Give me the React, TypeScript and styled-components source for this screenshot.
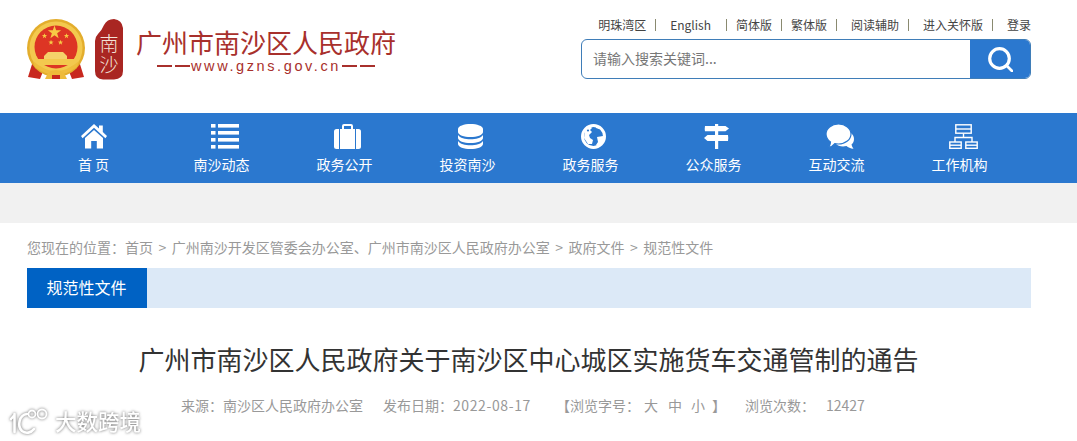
import React from "react";
import styled, { createGlobalStyle } from "styled-components";

const cjk = `"Noto Sans CJK SC", "Noto Sans", sans-serif`;

const Global = createGlobalStyle`
  html, body { margin: 0; padding: 0; background: #fff; height: 441px; overflow: hidden; }
  body { font-family: ${cjk}; }
`;

const Page = styled.div`
  position: relative;
  width: 1077px;
  height: 441px;
  overflow: hidden;
`;

const Header = styled.header`
  height: 113px;
  padding: 0 46px 0 27px;
  display: flex;
  justify-content: space-between;
  box-sizing: border-box;
`;

const LogoWrap = styled.div`
  display: flex;
  align-items: flex-start;
  padding-top: 19px;
`;

const LogoSeal = styled.svg`
  margin-left: 9px;
  flex: none;
`;

const SealText = styled.text`
  writing-mode: vertical-rl;
  font-family: ${cjk};
  font-size: 19px;
  font-weight: 300;
  letter-spacing: 2px;
  fill: #f3e3d8;
`;

const LogoTexts = styled.div`
  margin-left: 11px;
  padding-top: 7px;
  color: #a8302c;
  display: flex;
  flex-direction: column;
  align-items: center;
  width: 262px;
`;

const LogoTitle = styled.div`
  font-size: 26px;
  line-height: 32px;
  white-space: nowrap;
`;

const LogoUrl = styled.div`
  display: flex;
  align-items: center;
  margin-top: -1px;
  font-family: "Liberation Sans", sans-serif;
  font-size: 14.5px;
  line-height: 18px;
  letter-spacing: 2.6px;
  white-space: nowrap;
`;

const UrlDash = styled.span`
  display: block;
  flex: none;
  width: 15px;
  height: 2px;
  margin: 0 1.5px;
  background: #a8302c;
`;

const Right = styled.div`
  width: 450px;
  display: flex;
  flex-direction: column;
  padding-top: 17px;
`;

const TopLinks = styled.div`
  display: flex;
  justify-content: flex-end;
  height: 16px;
  align-items: center;
  font-size: 12px;
  line-height: 16px;
  color: #444;
  white-space: nowrap;
`;

const TopLink = styled.span<{ $before?: number; $after?: number }>`
  margin-left: ${(p) => p.$before ?? 0}px;
  margin-right: ${(p) => p.$after ?? 0}px;
`;

const Sep = styled.i`
  display: block;
  width: 1px;
  height: 12px;
  background: #8a8a70;
`;

const SearchBox = styled.div`
  margin-top: 6px;
  height: 40px;
  box-sizing: border-box;
  border: 1px solid #3f7db8;
  border-radius: 6px;
  display: flex;
  overflow: hidden;
`;

const Placeholder = styled.div`
  flex: 1;
  padding-left: 11px;
  font-size: 14px;
  line-height: 37px;
  color: #777;
`;

const SearchBtn = styled.div`
  width: 60px;
  background: #2b78cf;
  display: flex;
  align-items: center;
  justify-content: center;
`;

const Nav = styled.nav`
  height: 70px;
  background: #2b78cf;
  padding-left: 27px;
  display: grid;
  grid-template-columns: 133px repeat(7, 123px);
`;

const NavItem = styled.div`
  display: flex;
  flex-direction: column;
  align-items: center;
  color: #fff;
`;

const NavIcon = styled.div<{ $shift: number }>`
  height: 25px;
  margin-top: 11px;
  margin-left: ${(p) => p.$shift}px;
  display: flex;
  align-items: center;
  justify-content: center;
`;

const NavLabel = styled.div`
  margin-top: 5px;
  font-size: 14px;
  line-height: 20px;
  white-space: pre;
`;

const GrayBand = styled.div`
  height: 40px;
  background: #f1f1f1;
`;

const Main = styled.main`
  margin: 0 46px 0 27px;
`;

const Crumbs = styled.div`
  padding-top: 14px;
  height: 31px;
  font-size: 14px;
  line-height: 20px;
  color: #999;
  white-space: pre;
`;

const CrumbSep = styled.span`
  margin: 0 5.5px;
`;

const TabBar = styled.div`
  height: 40px;
  background: #dce9f7;
`;

const Tab = styled.div`
  width: 120px;
  height: 40px;
  padding-right: 1px;
  box-sizing: border-box;
  background: #0062c4;
  color: #fff;
  font-size: 16px;
  line-height: 39px;
  text-align: center;
`;

const Title = styled.h1`
  margin: 32px 1px 0 0;
  font-size: 26px;
  font-weight: 400;
  line-height: 38px;
  color: #333;
  text-align: center;
`;

const Meta = styled.div`
  margin: 17px 0 0 154px;
  display: flex;
  font-size: 14px;
  line-height: 20px;
  color: #999;
  white-space: pre;
`;

const MetaItem = styled.span<{ $w: number }>`
  width: ${(p) => p.$w}px;
  flex: none;
`;

const DateText = styled.span`
  letter-spacing: 0.6px;
`;

const SizeOpt = styled.span<{ $gap: number }>`
  margin-left: ${(p) => p.$gap}px;
`;

const Count = styled.span`
  margin-left: 11px;
`;

const Watermark = styled.div`
  position: absolute;
  left: 9px;
  top: 406px;
  display: flex;
  align-items: center;
  color: #fff;
  filter: drop-shadow(0 0 1.5px rgba(80, 80, 80, 0.85));
`;

const WmText = styled.span`
  margin-left: 2px;
  font-size: 21.5px;
  line-height: 30px;
  font-weight: 500;
`;

const HomeIcon = () => (
  <svg width="26" height="25" viewBox="0 0 26 25" fill="#fff">
    <path d="M13 0 L18 4.6 V1.5 H21.8 V8 L26 12 L24.4 14.2 L13 3.8 L1.6 14.2 L0 12 Z" />
    <path d="M13 6 L22 14 V24.5 H15.8 V17 H10.2 V24.5 H4 V14 Z" />
  </svg>
);

const ListIcon = () => (
  <svg width="28" height="25" viewBox="0 0 28 25" fill="#fff">
    {[0, 7, 14, 21].map((y) => (
      <g key={y}>
        <rect x="0" y={y} width="4.5" height="3.6" />
        <rect x="7" y={y} width="21" height="3.6" />
      </g>
    ))}
  </svg>
);

const CaseIcon = () => (
  <svg width="27" height="25" viewBox="0 0 27 25" fill="#fff">
    <path d="M5 5 V25 H2.5 Q0 25 0 22.5 V7.5 Q0 5 2.5 5 Z" />
    <rect x="6" y="5" width="15" height="20" />
    <path d="M22 5 H24.5 Q27 5 27 7.5 V22.5 Q27 25 24.5 25 H22 Z" />
    <path d="M9 5.5 V2 Q9 1 10 1 H17 Q18 1 18 2 V5.5" fill="none" stroke="#fff" strokeWidth="2" />
  </svg>
);

const DbIcon = () => (
  <svg width="25" height="25" viewBox="0 0 25 25" fill="#fff">
    <path d="M0 5 C0 2 6 0 12.5 0 S25 2 25 5 V8 C25 11 19 13 12.5 13 S0 11 0 8 Z" />
    <path d="M0 11 C2 14 7 15.2 12.5 15.2 S23 14 25 11 V14 C25 17 19 19 12.5 19 S0 17 0 14 Z" />
    <path d="M0 17 C2 20 7 21.2 12.5 21.2 S23 20 25 17 V20 C25 23 19 25 12.5 25 S0 23 0 20 Z" />
  </svg>
);

const GlobeIcon = () => (
  <svg width="25" height="25" viewBox="0 0 25 25">
    <circle cx="12.5" cy="12.5" r="11" fill="#2b78cf" stroke="#fff" strokeWidth="3" />
    <path d="M4 6 L9 2 L11 4 L9 6 L11 8 L8 11 L9 14 L12 16 L11 20 L7 20 L3 14 Z" fill="#fff" />
    <path d="M15 2 L20 3 L18 5 L15 4 Z" fill="#fff" />
    <path d="M16 13 L22 12 L24 14 L21 20 L17 23 L15 21 L17 18 Z" fill="#fff" />
    <circle cx="7" cy="6.5" r="1.1" fill="#2b78cf" />
  </svg>
);

const SignIcon = () => (
  <svg width="25" height="25" viewBox="0 0 25 25" fill="#fff">
    <rect x="11" y="0" width="3.2" height="25" />
    <path d="M1 2 H21.5 L25 4.5 L21.5 7.2 H1 Q0.5 4.5 1 2 Z" />
    <path d="M3.5 11 H24 Q24.5 14 24 17 H3.5 L0 14 Z" />
  </svg>
);

const ChatIcon = () => (
  <svg width="28" height="25" viewBox="0 0 28 25">
    <path d="M18 7 C24 7 28 10.5 28 15 C28 17.5 27 19.5 25.5 20.5 C25.8 22 26.5 23.5 27.5 24.8 C24.5 24.5 22 23.5 20.5 22 C16 23 12 22 10 20 Z" fill="#fff" />
    <path d="M12.5 0 C19.5 0 25 4.5 25 10 C25 15.5 19.5 20 12.5 20 C11 20 10 20 8.8 19.7 C7.5 21.5 5 23 2.5 23.3 C3.8 21.5 4.5 19.8 4.5 18 C1.7 16 0 13.2 0 10 C0 4.5 5.5 0 12.5 0 Z" fill="#fff" stroke="#2b78cf" strokeWidth="1.2" />
  </svg>
);

const OrgIcon = () => (
  <svg width="29" height="25" viewBox="0 0 29 25" fill="none" stroke="#fff" strokeWidth="1.4">
    <rect x="6.8" y="0.8" width="15.4" height="8.4" />
    <line x1="7" y1="5" x2="22" y2="5" />
    <path d="M14.5 9.5V13.5M6 18V13.5H23V18" />
    <rect x="0.8" y="18" width="11.4" height="6.3" />
    <rect x="16.8" y="18" width="11.4" height="6.3" />
    <line x1="1" y1="21.2" x2="12" y2="21.2" />
    <line x1="17" y1="21.2" x2="28" y2="21.2" />
  </svg>
);

const SearchIcon = () => (
  <svg width="25" height="25" viewBox="0 0 25 25" fill="none" stroke="#fff" strokeLinecap="round">
    <circle cx="11.5" cy="11.5" r="9.8" strokeWidth="3.2" />
    <line x1="19" y1="19" x2="24" y2="24" strokeWidth="2.8" />
  </svg>
);

const starPoints = (cx: number, cy: number, r: number) =>
  Array.from({ length: 10 }, (_, i) => {
    const rad = i % 2 === 0 ? r : r * 0.4;
    const a = (-90 + i * 36) * (Math.PI / 180);
    return `${(cx + rad * Math.cos(a)).toFixed(2)},${(cy + rad * Math.sin(a)).toFixed(2)}`;
  }).join(" ");

const Emblem = () => (
  <svg width="58" height="61" viewBox="0 0 58 61">
    <path d="M6 42 L1 58 L13 60 L17 50 Z M52 42 L57 58 L45 60 L41 50 Z" fill="#c8281e" />
    <circle cx="29" cy="29" r="29" fill="#e3ad2c" />
    <circle cx="29" cy="29" r="26.5" fill="#f3c94e" />
    <circle cx="29" cy="28" r="21.5" fill="#dd3524" />
    <polygon points={starPoints(27.5, 13.5, 7)} fill="#f7cb45" />
    <polygon points={starPoints(17.5, 17, 2.8)} fill="#f7cb45" />
    <polygon points={starPoints(39.5, 17, 2.8)} fill="#f7cb45" />
    <polygon points={starPoints(24, 23.5, 2.8)} fill="#f7cb45" />
    <polygon points={starPoints(33.5, 23.5, 2.8)} fill="#f7cb45" />
    <path d="M17 37 L21 33 H36 L40 37 V40 H17 Z" fill="#f5d26a" />
    <path d="M8 40 H50 L48 46 H10 Z" fill="#f3c94e" />
    <path d="M6 42 Q29 62 52 42 L50 48 Q29 64 8 48 Z" fill="#efbd3d" />
    <path d="M18 60 L21 54 Q29 48 37 54 L40 60 Z" fill="#eebb3a" />
    <path d="M25 56 H33 V60 H25 Z" fill="#c8281e" />
  </svg>
);

const Seal = () => (
  <LogoSeal width="30" height="61" viewBox="0 0 30 61">
    <path d="M4 15 Q8 11 10 6 Q13 0 20 0 Q28 1 29 9 V52 Q29 60 20 60.5 H9 Q1 60 1 52 V22 Q1 18 4 15 Z" fill="#a92622" />
    <SealText x="15" y="15">南沙</SealText>
  </LogoSeal>
);

const WmLogo = () => (
  <svg width="44" height="30" viewBox="0 0 44 30" fill="none" stroke="#fff" strokeWidth="2.6">
    <path d="M5.5 9 L2 13 M5.5 8 V26" strokeLinecap="round" />
    <path d="M18 8 C10 9 8 20 13 25 C17 28 22 27 25 23" strokeLinecap="round" />
    <circle cx="23" cy="8" r="3.5" strokeWidth="1.8" />
    <circle cx="33" cy="8" r="4.5" strokeWidth="1.8" />
  </svg>
);

const navItems: { label: string; icon: React.ReactNode; shift: number }[] = [
  { label: "首 页", icon: <HomeIcon />, shift: 0 },
  { label: "南沙动态", icon: <ListIcon />, shift: 6 },
  { label: "政务公开", icon: <CaseIcon />, shift: 5 },
  { label: "投资南沙", icon: <DbIcon />, shift: 5 },
  { label: "政务服务", icon: <GlobeIcon />, shift: 5 },
  { label: "公众服务", icon: <SignIcon />, shift: 5 },
  { label: "互动交流", icon: <ChatIcon />, shift: 6 },
  { label: "工作机构", icon: <OrgIcon />, shift: 7 },
];

export default function App() {
  return (
    <Page>
      <Global />
      <Header>
        <LogoWrap>
          <Emblem />
          <Seal />
          <LogoTexts>
            <LogoTitle>广州市南沙区人民政府</LogoTitle>
            <LogoUrl>
              <UrlDash />
              <UrlDash />
              www.gzns.gov.cn
              <UrlDash />
              <UrlDash />
            </LogoUrl>
          </LogoTexts>
        </LogoWrap>
        <Right>
          <TopLinks>
            <TopLink $after={9}>明珠湾区</TopLink>
            <Sep />
            <TopLink $before={14} $after={15}>English</TopLink>
            <Sep />
            <TopLink $before={9} $after={9}>简体版</TopLink>
            <Sep />
            <TopLink $before={9} $after={9}>繁体版</TopLink>
            <Sep />
            <TopLink $before={14} $after={9}>阅读辅助</TopLink>
            <Sep />
            <TopLink $before={14} $after={9}>进入关怀版</TopLink>
            <Sep />
            <TopLink $before={14}>登录</TopLink>
          </TopLinks>
          <SearchBox>
            <Placeholder>请输入搜索关键词...</Placeholder>
            <SearchBtn>
              <SearchIcon />
            </SearchBtn>
          </SearchBox>
        </Right>
      </Header>
      <Nav>
        {navItems.map((n) => (
          <NavItem key={n.label}>
            <NavIcon $shift={n.shift}>{n.icon}</NavIcon>
            <NavLabel>{n.label}</NavLabel>
          </NavItem>
        ))}
      </Nav>
      <GrayBand />
      <Main>
        <Crumbs>
          您现在的位置：首页<CrumbSep>&gt;</CrumbSep>广州南沙开发区管委会办公室、广州市南沙区人民政府办公室<CrumbSep>&gt;</CrumbSep>政府文件<CrumbSep>&gt;</CrumbSep>规范性文件
        </Crumbs>
        <TabBar>
          <Tab>规范性文件</Tab>
        </TabBar>
        <Title>广州市南沙区人民政府关于南沙区中心城区实施货车交通管制的通告</Title>
        <Meta>
          <MetaItem $w={202}>来源：南沙区人民政府办公室</MetaItem>
          <MetaItem $w={173}>发布日期：<DateText>2022-08-17</DateText></MetaItem>
          <MetaItem $w={189}>
            【浏览字号：<SizeOpt $gap={4}>大</SizeOpt><SizeOpt $gap={10}>中</SizeOpt><SizeOpt $gap={9}>小</SizeOpt><SizeOpt $gap={7}>】</SizeOpt>
          </MetaItem>
          <MetaItem $w={130}>浏览次数：<Count>12427</Count></MetaItem>
        </Meta>
      </Main>
      <Watermark>
        <WmLogo />
        <WmText>大数跨境</WmText>
      </Watermark>
    </Page>
  );
}
